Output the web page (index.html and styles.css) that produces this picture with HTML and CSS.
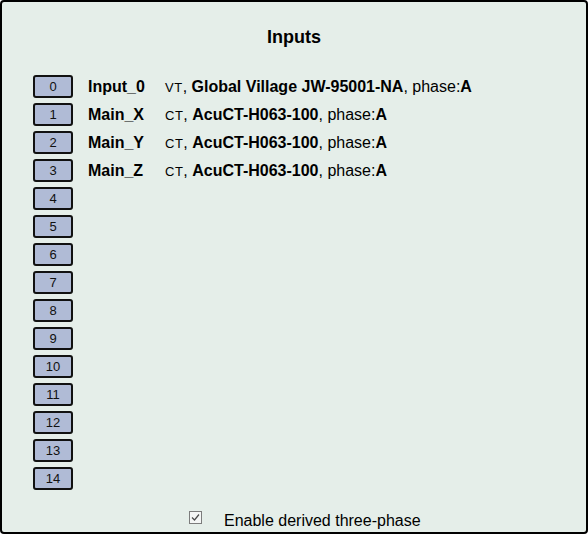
FILE: index.html
```html
<!DOCTYPE html>
<html lang="en">
<head>
  <meta charset="UTF-8">
  <title>Inputs</title>
  <link rel="stylesheet" href="styles.css">
</head>
<body>
  <div class="panel">
    <h2>Inputs</h2>
    <div class="inputs" id="inputs"></div>
    <label class="derived">
      <svg class="check" width="13" height="13" viewBox="0 0 13 13">
        <rect x="0.5" y="0.5" width="12" height="12" fill="#f4f6f5" stroke="#7c7c7c"/>
        <path d="M3 6.5 L5.5 9 L10 3.5" fill="none" stroke="#4a4a4a" stroke-width="1.2"/>
      </svg>
      <span>Enable derived three-phase</span>
    </label>
  </div>

  <script>
    const inputs = [
      { name: 'Input_0', type: 'VT', model: 'Global Village JW-95001-NA', phase: 'A' },
      { name: 'Main_X', type: 'CT', model: 'AcuCT-H063-100', phase: 'A' },
      { name: 'Main_Y', type: 'CT', model: 'AcuCT-H063-100', phase: 'A' },
      { name: 'Main_Z', type: 'CT', model: 'AcuCT-H063-100', phase: 'A' }
    ];
    const list = document.getElementById('inputs');
    for (let i = 0; i < 15; i++) {
      const row = document.createElement('div');
      row.className = 'input-row';
      const inp = inputs[i];
      let html = `<button class="chan">${i}</button>`;
      if (inp) {
        html += `<span class="name">${inp.name}</span>` +
          `<span class="desc"><span class="type">${inp.type}</span>, <b>${inp.model}</b>, phase:<b>${inp.phase}</b></span>`;
      }
      row.innerHTML = html;
      list.appendChild(row);
    }
  </script>
</body>
</html>
```

FILE: styles.css
```css
body {
  margin: 0;
  font-family: "Liberation Sans", Arial, sans-serif;
  color: #000;
}
.panel {
  box-sizing: border-box;
  width: 588px;
  height: 534px;
  border: 2px solid #000;
  border-radius: 4px;
  background-color: #e5eee9;
  padding: 25px 0 0 31px;
}
h2 {
  margin: 0 0 0 -31px;
  text-align: center;
  font-size: 18px;
  line-height: 20px;
}
.inputs {
  margin-top: 28px;
}
.input-row {
  display: flex;
  align-items: center;
  height: 23px;
  margin-bottom: 5px;
  font-size: 16px;
}
.chan {
  box-sizing: border-box;
  width: 40px;
  height: 23px;
  margin: 0 15px 0 0;
  padding: 0;
  border: 2px solid #111;
  border-radius: 3px;
  background-color: #b0bbd6;
  font-family: "Liberation Sans", Arial, sans-serif;
  font-size: 13px;
  color: #111;
}
.name {
  width: 77px;
  font-weight: bold;
}
.type {
  font-size: 13px;
  letter-spacing: 0.5px;
}
.derived {
  display: flex;
  align-items: center;
  margin: 21px 0 0 156px;
  font-size: 16px;
}
.check {
  margin: 0 22px 6px 0;
}
```
